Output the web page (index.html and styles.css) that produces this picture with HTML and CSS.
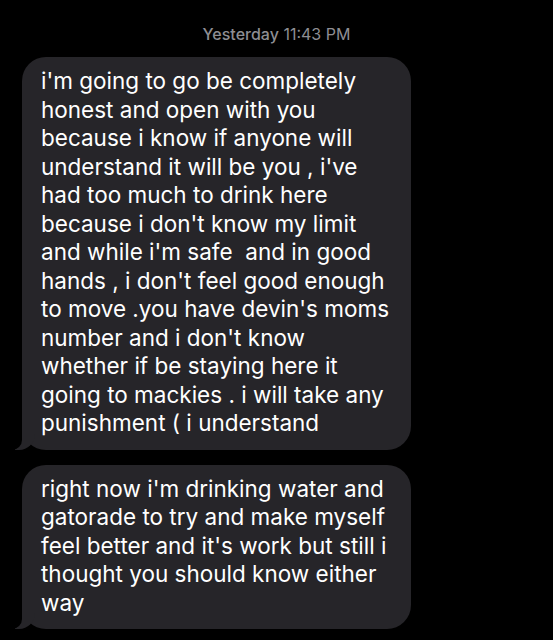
FILE: index.html
```html
<!DOCTYPE html>
<html>

<head>
    <meta charset="utf-8" />
    <title>Messages</title>
    <link rel="stylesheet" href="styles.css">
</head>

<body>
    <div class="thread">
        <p class="stamp"><span class="day">Yesterday</span> 11:43 PM</p>

        <div class="bubble">
            i'm going to go be completely<br>
            honest and open with you<br>
            because i know if anyone will<br>
            understand it will be you , i've<br>
            had too much to drink here<br>
            because i don't know my limit<br>
            and while i'm safe&nbsp; and in good<br>
            hands , i don't feel good enough<br>
            to move .you have devin's moms<br>
            number and i don't know<br>
            whether if be staying here it<br>
            going to mackies . i will take any<br>
            punishment ( i understand
        </div>

        <div class="bubble">
            right now i'm drinking water and<br>
            gatorade to try and make myself<br>
            feel better and it's work but still i<br>
            thought you should know either<br>
            way
        </div>
    </div>
</body>

</html>
```

FILE: styles.css
```css
html,
body {
    margin: 0;
    background-color: #000;
}

body {
    width: 553px;
    height: 640px;
    overflow: hidden;
    font-family: "Inter", "Liberation Sans", sans-serif;
}

.thread {
    padding: 24px 0 0 22px;
}

.stamp {
    margin: 0 0 13px -22px;
    text-align: center;
    font-size: 16px;
    line-height: 20px;
    color: #8e8e93;
    padding-left: 0;
}

.stamp .day {
    font-weight: 500;
}

.bubble {
    position: relative;
    width: 389px;
    box-sizing: border-box;
    margin-bottom: 15px;
    padding: 10px 12px 12px 19px;
    background-color: #262529;
    border-radius: 24px;
    color: #fff;
    font-size: 22.5px;
    line-height: 28.5px;
}

/* the little tail on the lower left */
.bubble::before {
    content: "";
    position: absolute;
    left: -7px;
    bottom: 0;
    width: 20px;
    height: 24px;
    background-color: #262529;
    border-bottom-right-radius: 16px;
}

.bubble::after {
    content: "";
    position: absolute;
    left: -26px;
    bottom: 0;
    width: 26px;
    height: 24px;
    background-color: #000;
    border-bottom-right-radius: 10px;
}
```
